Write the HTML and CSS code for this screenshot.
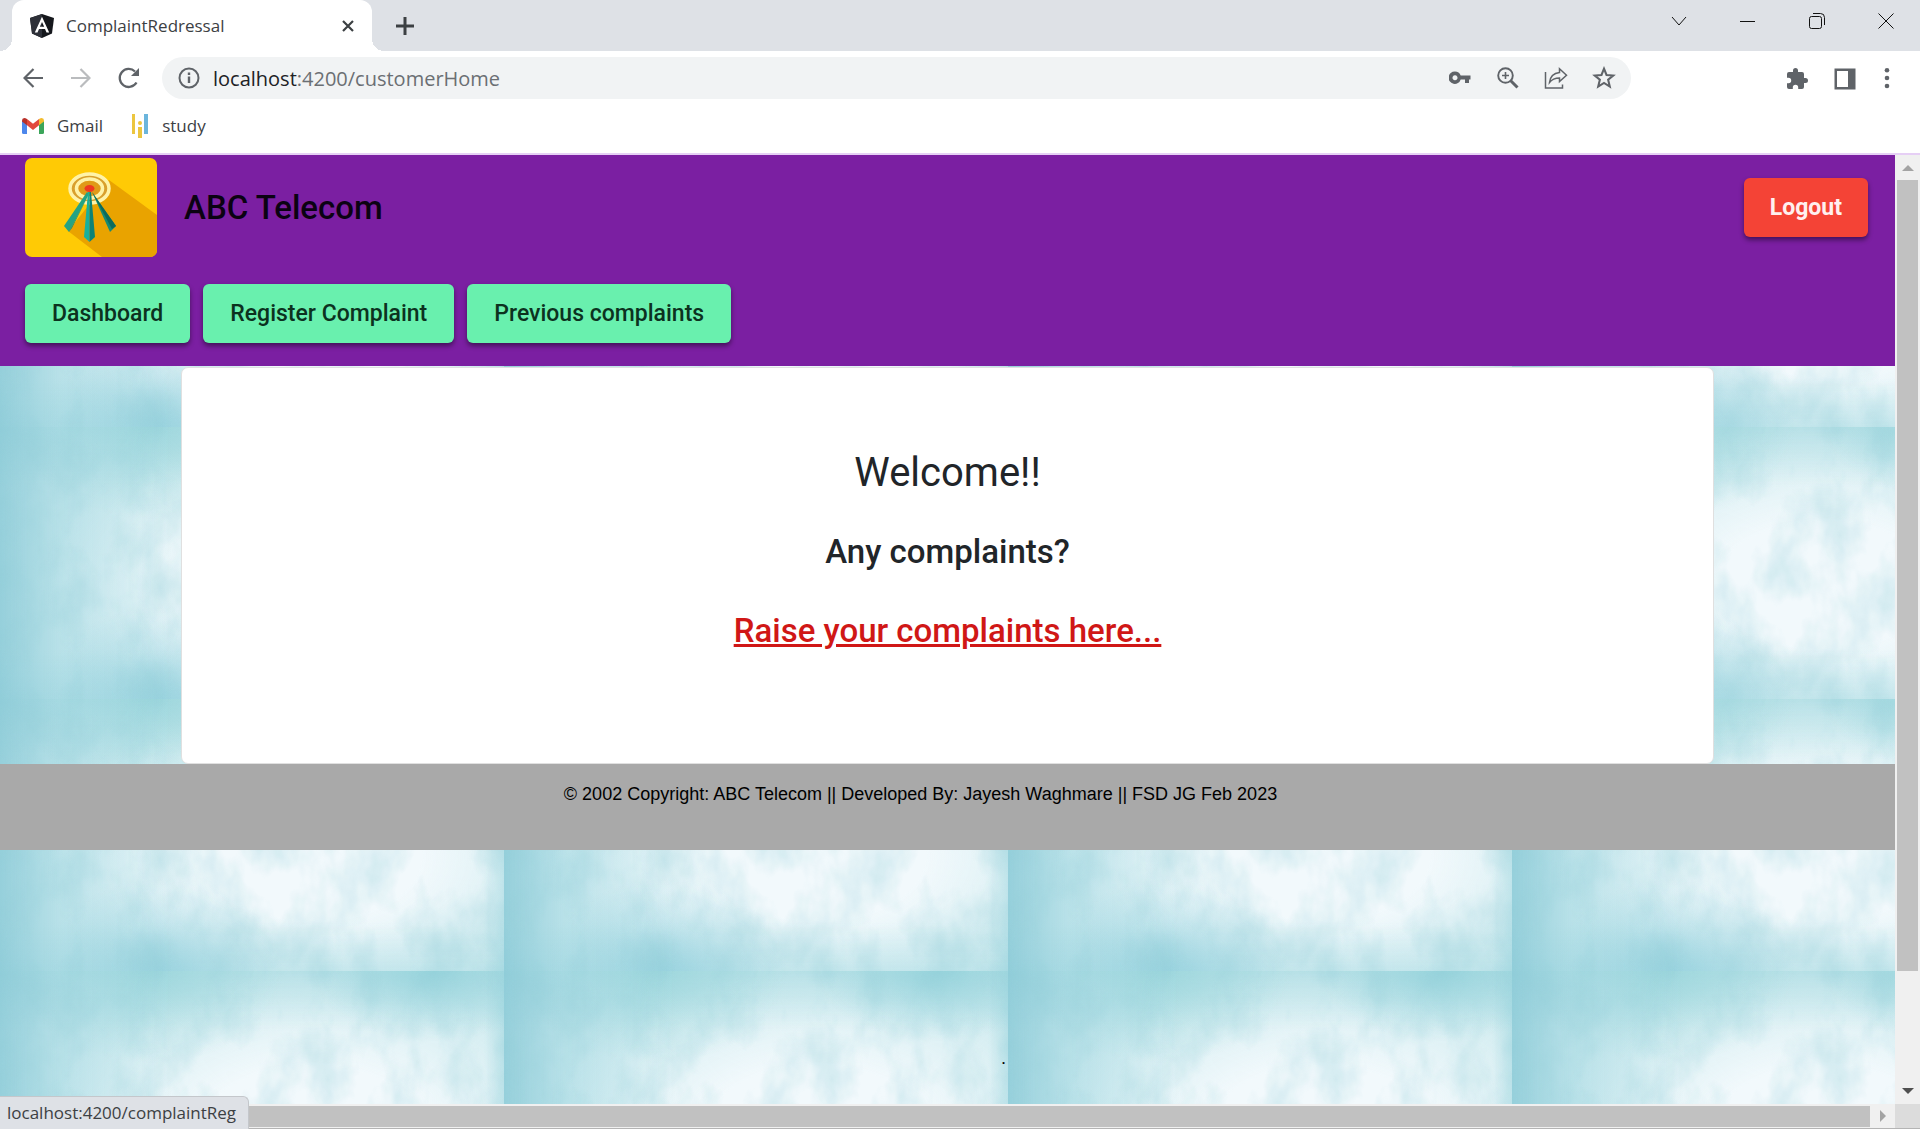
FILE: index.html
```html
<!DOCTYPE html>
<html lang="en">
<head>
<meta charset="utf-8">
<title>ComplaintRedressal</title>
<link rel="stylesheet" href="styles.css">
</head>
<body>
<div class="window">
  <div class="tabstrip">
    <div class="tab">
      <svg class="favicon" width="24" height="24" viewBox="0 0 24 24" aria-hidden="true">
        <path fill="#15171c" d="M12 0 24 4 22 19.500 12 24 2 19.500 0 4z"/>
        <path fill="#2d3038" d="M12 0 0 4 2 19.500 12 24z"/>
        <path fill="#fff" fill-rule="evenodd" d="M12 2.800 4.800 18.500H7.500L9 15H15L16.500 18.500H19.200zM12 8 14.200 12.800H9.800z"/>
      </svg>
      <span class="tab-title">ComplaintRedressal</span>
      <button class="icon-button" aria-label="Close tab"><svg width="12" height="12" viewBox="0 0 12 12"><path d="M1 1 11 11M11 1 1 11" stroke="#3c4043" stroke-width="2.200"/></svg></button>
    </div>
    <button class="icon-button new-tab" aria-label="New tab"><svg width="18" height="18" viewBox="0 0 18 18"><path d="M9 0V18M0 9H18" stroke="#3c4043" stroke-width="3"/></svg></button>
    <div class="window-controls">
      <button class="icon-button" aria-label="Search tabs"><svg width="16" height="16" viewBox="0 0 16 16"><path d="M1 4 8 12 15 4"/></svg></button>
      <button class="icon-button" aria-label="Minimize"><svg width="16" height="16" viewBox="0 0 16 16"><path d="M0 8.500H15"/></svg></button>
      <button class="icon-button" aria-label="Restore"><svg width="16" height="16" viewBox="0 0 16 16"><rect x=".5" y="3.500" width="12" height="12" rx="2"/><path d="M4 .5H11.500Q15.500 .5 15.500 4.500V12"/></svg></button>
      <button class="icon-button" aria-label="Close"><svg width="16" height="16" viewBox="0 0 16 16"><path d="M.5 .5 15.500 15.500M15.500 .5 .5 15.500"/></svg></button>
    </div>
  </div>

  <div class="toolbar">
    <div class="nav-buttons">
      <button class="icon-button" aria-label="Back"><svg width="20" height="20" viewBox="0 0 20 20"><path d="M20 10H2M10.500 1 1.500 10 10.500 19" fill="none" stroke="#5f6368" stroke-width="2.200"/></svg></button>
      <button class="icon-button" aria-label="Forward"><svg width="20" height="20" viewBox="0 0 20 20"><path d="M0 10H18M9.500 1 18.500 10 9.500 19" fill="none" stroke="#babcbe" stroke-width="2.200"/></svg></button>
      <button class="icon-button" aria-label="Reload"><svg width="22" height="22" viewBox="0 0 22 22"><path d="M18.500 15.500A9 9 0 1 1 17 4.500" fill="none" stroke="#5f6368" stroke-width="2.300"/><path fill="#5f6368" d="M21 1V9H13z"/></svg></button>
    </div>
    <div class="omnibox">
      <svg width="22" height="22" viewBox="0 0 22 22" aria-hidden="true"><circle cx="11" cy="11" r="9.500" fill="none" stroke="#5f6368" stroke-width="2"/><path d="M11 9.500V16M11 5.500V8" stroke="#5f6368" stroke-width="2.400"/></svg>
      <div class="url"><span class="url-host">localhost</span>:4200/customerHome</div>
      <div class="omnibox-actions">
        <button class="icon-button" aria-label="Passwords"><svg width="22" height="22" viewBox="0 0 22 22"><path fill="#5f6368" fill-rule="evenodd" d="M6 4.500a6.200 6.200 0 0 1 5.700 4H21.500V12.500H20V16H16V12.500H11.700A6.200 6.200 0 1 1 6 4.500zM6 8.200a2.500 2.500 0 1 0 .01 0z"/></svg></button>
        <button class="icon-button" aria-label="Zoom"><svg width="22" height="22" viewBox="0 0 22 22"><g fill="none" stroke="#5f6368"><circle cx="8.500" cy="8.500" r="7.300" stroke-width="1.900"/><path d="M8.500 5V12M5 8.500H12" stroke-width="1.600"/><path d="M13.500 13.500 20.500 20.500" stroke-width="3"/></g></svg></button>
        <button class="icon-button" aria-label="Share"><svg width="24" height="22" viewBox="0 0 24 22"><g fill="none" stroke="#5f6368" stroke-width="1.500"><path d="M1.500 5V21H18.500V17.500"/><path d="M15.500 1.800 22.500 8.300 15.500 14.500V11Q9 11 5.500 15.500 6.500 6.500 15.500 5.500z"/></g></svg></button>
        <button class="icon-button" aria-label="Bookmark"><svg width="24" height="24" viewBox="0 0 22 22"><path d="M11 2.500 13.300 8.200 19.500 8.700 14.800 12.600 16.300 18.800 11 15.500 5.700 18.800 7.200 12.600 2.500 8.700 8.700 8.200z" fill="none" stroke="#5f6368" stroke-width="1.900"/></svg></button>
      </div>
    </div>
    <div class="toolbar-actions">
      <button class="icon-button" aria-label="Extensions"><svg width="24" height="24" viewBox="0 0 24 24"><path fill="#5f6368" d="M20.500 11H19V7a2 2 0 0 0-2-2h-4V3.500a2.500 2.500 0 0 0-5 0V5H4a2 2 0 0 0-2 2v3.800h1.500a2.700 2.700 0 0 1 0 5.400H2V20a2 2 0 0 0 2 2h3.800v-1.500a2.700 2.700 0 0 1 5.400 0V22H17a2 2 0 0 0 2-2v-4h1.500a2.500 2.500 0 0 0 0-5z"/></svg></button>
      <button class="icon-button" aria-label="Side panel"><svg width="22" height="22" viewBox="0 0 22 22"><path fill="#5f6368" fill-rule="evenodd" d="M.5 .5H21.500V21.500H.5zM3 3V19H14V3z"/></svg></button>
      <button class="icon-button menu-button" aria-label="Menu"><svg width="6" height="22" viewBox="0 0 6 22"><g fill="#5f6368"><circle cx="3" cy="2.300" r="2.300"/><circle cx="3" cy="10" r="2.300"/><circle cx="3" cy="18" r="2.300"/></g></svg></button>
    </div>
  </div>

  <nav class="bookmarks" aria-label="Bookmarks">
    <a class="bookmark" href="#gmail">
      <svg width="22" height="16" viewBox="0 0 22 16" aria-hidden="true"><path fill="#4d87ec" d="M0 3H5V16H1.500Q0 16 0 14.500z"/><path fill="#3ba55a" d="M17 3H22V14.500Q22 16 20.500 16H17z"/><path fill="#e2483d" d="M5 1 11 5.700 17 1V7.300L11 12 5 7.300z"/><path fill="#b8302a" d="M0 2.500Q0 0 2.300 0 3.500 0 5 1V7.300L0 3.500z"/><path fill="#f3bc2d" d="M22 2.500Q22 0 19.700 0 18.500 0 17 1V7.300L22 3.500z"/></svg>
      Gmail
    </a>
    <a class="bookmark" href="#study">
      <svg width="18" height="24" viewBox="0 0 18 24" aria-hidden="true"><path fill="#ecc63f" d="M1 0H4V20H1zM7 13H11V24H7z"/><circle cx="9" cy="9" r="2" fill="#ecc63f"/><path fill="#6bb5dc" d="M13 0H17V20H13z"/></svg>
      study
    </a>
  </nav>

  <div class="viewport">
    <div class="page">
      <header class="site-header">
        <div class="header-row">
          <svg class="logo" width="132" height="99" viewBox="0 0 132 99" role="img" aria-label="ABC Telecom logo">
            <rect width="132" height="99" fill="#ffca05"/>
            <path fill="#e9a300" d="M84 22 132 57V99H77L43 73z"/>
            <g fill="none" stroke="#fff3a8" stroke-width="3.500"><ellipse cx="64.500" cy="30.500" rx="19.500" ry="14.500" fill="#d9a02e"/><ellipse cx="64.500" cy="30.500" rx="13" ry="9.500" fill="#e09a18"/></g>
            <path fill="#25a383" d="M62 34 39 68 44 74 64 36z"/><path fill="#168a75" d="M64 36 44 74 47 70z"/>
            <path fill="#178a72" d="M67 34 91 68 85 74z"/><path fill="#0d6a5c" d="M67 34 91 68 87 71z"/>
            <path fill="#18b09b" d="M63 34 59 79 64.500 84V34z"/><path fill="#0d8277" d="M66 34 70 79 64.500 84V34z"/>
            <ellipse cx="64.500" cy="30.500" rx="5" ry="3.500" fill="#ee3a20"/>
          </svg>
          <h1 class="brand">ABC Telecom</h1>
          <button class="button button-warn">Logout</button>
        </div>
        <nav class="header-row header-nav" aria-label="Main">
          <button class="button">Dashboard</button>
          <button class="button">Register Complaint</button>
          <button class="button">Previous complaints</button>
        </nav>
      </header>
      <main class="content">
        <section class="card">
          <h2 class="welcome">Welcome!!</h2>
          <h3 class="prompt">Any complaints?</h3>
          <a class="raise" href="#complaintReg">Raise your complaints here...</a>
        </section>
      </main>
      <footer class="site-footer">© 2002 Copyright: ABC Telecom || Developed By: Jayesh Waghmare || FSD JG Feb 2023</footer>
      <p class="trailing">.</p>
    </div>
    <div class="scrollbar scrollbar-y" aria-hidden="true">
      <svg width="12" height="6" viewBox="0 0 12 6"><path fill="#a3a3a3" d="M0 6 6 0 12 6z"/></svg>
      <div class="track"><div class="thumb"></div></div>
      <svg width="12" height="6" viewBox="0 0 12 6"><path fill="#505050" d="M0 0 6 6 12 0z"/></svg>
    </div>
    <div class="scrollbar scrollbar-x" aria-hidden="true">
      <div class="thumb"></div>
      <svg width="6" height="12" viewBox="0 0 6 12"><path fill="#a3a3a3" d="M0 0 6 6 0 12z"/></svg>
    </div>
    <div class="corner"></div>
    <div class="status">localhost:4200/complaintReg</div>
  </div>
</div>
</body>
</html>
```

FILE: styles.css
```css
* { box-sizing: border-box; }

body {
  margin: 0;
  font-family: "Open Sans", "Noto Sans", sans-serif;
  color: #3c4043;
}

h1, h2, h3, p { margin: 0; font-weight: 400; }

.window {
  display: flex;
  flex-direction: column;
  height: 100vh;
  background: #fff;
}

.icon-button {
  display: flex;
  align-items: center;
  justify-content: center;
  width: 24px;
  height: 24px;
  padding: 0;
  border: 0;
  background: none;
}

/* Browser chrome */
.tabstrip {
  display: flex;
  align-items: stretch;
  height: 51px;
  padding-left: 12px;
  background: #dee1e6;
}

.tab {
  position: relative;
  display: flex;
  align-items: center;
  width: 360px;
  padding: 0 12px 0 18px;
  border-radius: 12px 12px 0 0;
  background: #fff;
}

.tab::before,
.tab::after {
  content: "";
  position: absolute;
  bottom: 0;
  width: 12px;
  height: 12px;
}

.tab::before { left: -12px; background: radial-gradient(circle at 0 0, transparent 12px, #fff 12px); }
.tab::after { right: -12px; background: radial-gradient(circle at 100% 0, transparent 12px, #fff 12px); }

.tab-title {
  flex: 1;
  margin-left: 12px;
  font-size: 17px;
}

.new-tab { align-self: center; margin-left: 21px; }

.window-controls {
  display: flex;
  gap: 45px;
  margin: 9px 22px 0 auto;
}

.window-controls svg { fill: none; stroke: #111; }

.toolbar {
  display: flex;
  align-items: center;
  height: 54px;
}

.nav-buttons {
  display: flex;
  gap: 24px;
  width: 162px;
  padding-left: 21px;
}

.omnibox {
  display: flex;
  flex: 1;
  align-items: center;
  height: 42px;
  padding: 0 15px 0 16px;
  border-radius: 21px;
  background: #f1f3f4;
}

.url {
  flex: 1;
  margin-left: 13px;
  font-size: 20px;
  color: #6b6f73;
}

.url-host { color: #202124; }

.omnibox-actions {
  display: flex;
  gap: 24px;
}

.toolbar-actions {
  display: flex;
  justify-content: flex-end;
  width: 289px;
  padding: 2px 27px 0 0;
  gap: 24px;
}

.menu-button { width: 12px; }

.bookmarks {
  display: flex;
  gap: 28px;
  align-items: center;
  height: 50px;
  padding: 0 22px 6px;
  border-bottom: 2px solid #e6cff5;
}

.bookmark {
  display: flex;
  gap: 13px;
  align-items: center;
  font-size: 17px;
  line-height: 24px;
  color: #3c4043;
  text-decoration: none;
}

/* Page area and its scrollbars */
.viewport {
  position: relative;
  display: grid;
  flex: 1;
  grid-template-columns: 1fr 25px;
  grid-template-rows: 1fr 25px;
  min-height: 0;
}

/* Watercolour tile: soft vertical streaks over teal edges and a pale centre */
.page {
  overflow: hidden;
  font-family: Roboto, sans-serif;
  background-color: #cfebef;
  background-image:
    url("data:image/svg+xml,%3Csvg xmlns='http://www.w3.org/2000/svg' width='504' height='272'%3E%3Cfilter id='n' x='0' y='0' width='100%25' height='100%25' color-interpolation-filters='sRGB'%3E%3CfeTurbulence type='fractalNoise' baseFrequency='.024 .014' numOctaves='4' seed='8' stitchTiles='stitch'/%3E%3CfeColorMatrix values='0 0 0 0 .56 0 0 0 0 .8 0 0 0 0 .84 .8 0 0 0 -.32'/%3E%3C/filter%3E%3Crect width='504' height='272' filter='url(%23n)'/%3E%3C/svg%3E"),
    linear-gradient(90deg, rgba(130, 198, 212, .75), rgba(150, 210, 222, .4) 12%, transparent 34%, transparent 96%, rgba(140, 205, 216, .4)),
    radial-gradient(ellipse 24% 34% at 32% 100%, rgba(140, 205, 219, .7), transparent),
    radial-gradient(ellipse 26% 34% at 30% 0, rgba(140, 208, 214, .6), transparent),
    radial-gradient(ellipse 24% 26% at 86% 0, rgba(130, 203, 213, .6), transparent),
    linear-gradient(180deg, rgba(150, 210, 219, .4), transparent 22%, transparent 82%, rgba(150, 210, 220, .35)),
    radial-gradient(ellipse 54% 58% at 62% 58%, #f2f9fc 40%, rgba(242, 249, 252, 0));
  background-size: 504px 272px;
}

.site-header { background: #7b1fa2; }

.header-row {
  display: flex;
  align-items: center;
  height: 105px;
  padding: 0 27px 0 25px;
}

.header-nav { gap: 13px; height: 106px; }

.logo { border-radius: 7px; }

.brand {
  flex: 1;
  margin-left: 27px;
  font-size: 33px;
  font-weight: 500;
  line-height: 40px;
  color: #0b0212;
}

.button {
  height: 59px;
  padding: 0 27px;
  border: 0;
  border-radius: 6px;
  background: #69f0ae;
  box-shadow: 0 3px 5px rgba(0, 0, 0, .45);
  font-family: inherit;
  font-size: 23px;
  font-weight: 500;
  color: #0c321f;
}

.button-warn {
  padding: 0 26px;
  background: #f44336;
  font-weight: 700;
  color: #fff0ef;
}

.content { padding: 1px 181px 0; }

.card {
  display: flex;
  flex-direction: column;
  gap: 39px;
  align-items: center;
  padding: 85px 20px 112px;
  border: 1px solid #e0e0e0;
  border-radius: 7px;
  background: #fff;
  line-height: 40px;
  color: #212529;
}

.welcome { font-size: 40px; }
.prompt { font-size: 33px; font-weight: 500; }

.raise {
  font-size: 33px;
  font-weight: 500;
  color: #d01716;
}

.site-footer {
  height: 86px;
  padding: 18px 54px 0 0;
  background: #a9a9a9;
  font-family: "Liberation Sans", Arial, sans-serif;
  font-size: 18px;
  line-height: 24px;
  text-align: center;
  color: #000;
}

.trailing {
  padding: 196px 0 0 112px;
  font-size: 18px;
  line-height: 24px;
  text-align: center;
  color: #000;
}

.scrollbar {
  display: flex;
  align-items: center;
  background: #f0f0f0;
}

.scrollbar-y {
  flex-direction: column;
  padding: 10px 2px;
  gap: 9px;
}

.track { flex: 1; width: 21px; }

.thumb { background: #c1c1c1; }
.scrollbar-y .thumb { height: 88%; }

.scrollbar-x { gap: 10px; padding: 0 9px 0 25px; border-bottom: 1px solid #b4b4b4; }
.scrollbar-x .thumb { flex: 1; height: 21px; }

.corner { background: #dcdcdc; border-bottom: 1px solid #b4b4b4; }

.status {
  position: absolute;
  bottom: 0;
  left: 0;
  padding: 4px 12px 4px 7px;
  border-top: 1px solid #c4c7cb;
  border-right: 1px solid #c4c7cb;
  border-radius: 0 6px 0 0;
  background: #dee1e6;
  font-size: 17px;
  line-height: 24px;
}
```
